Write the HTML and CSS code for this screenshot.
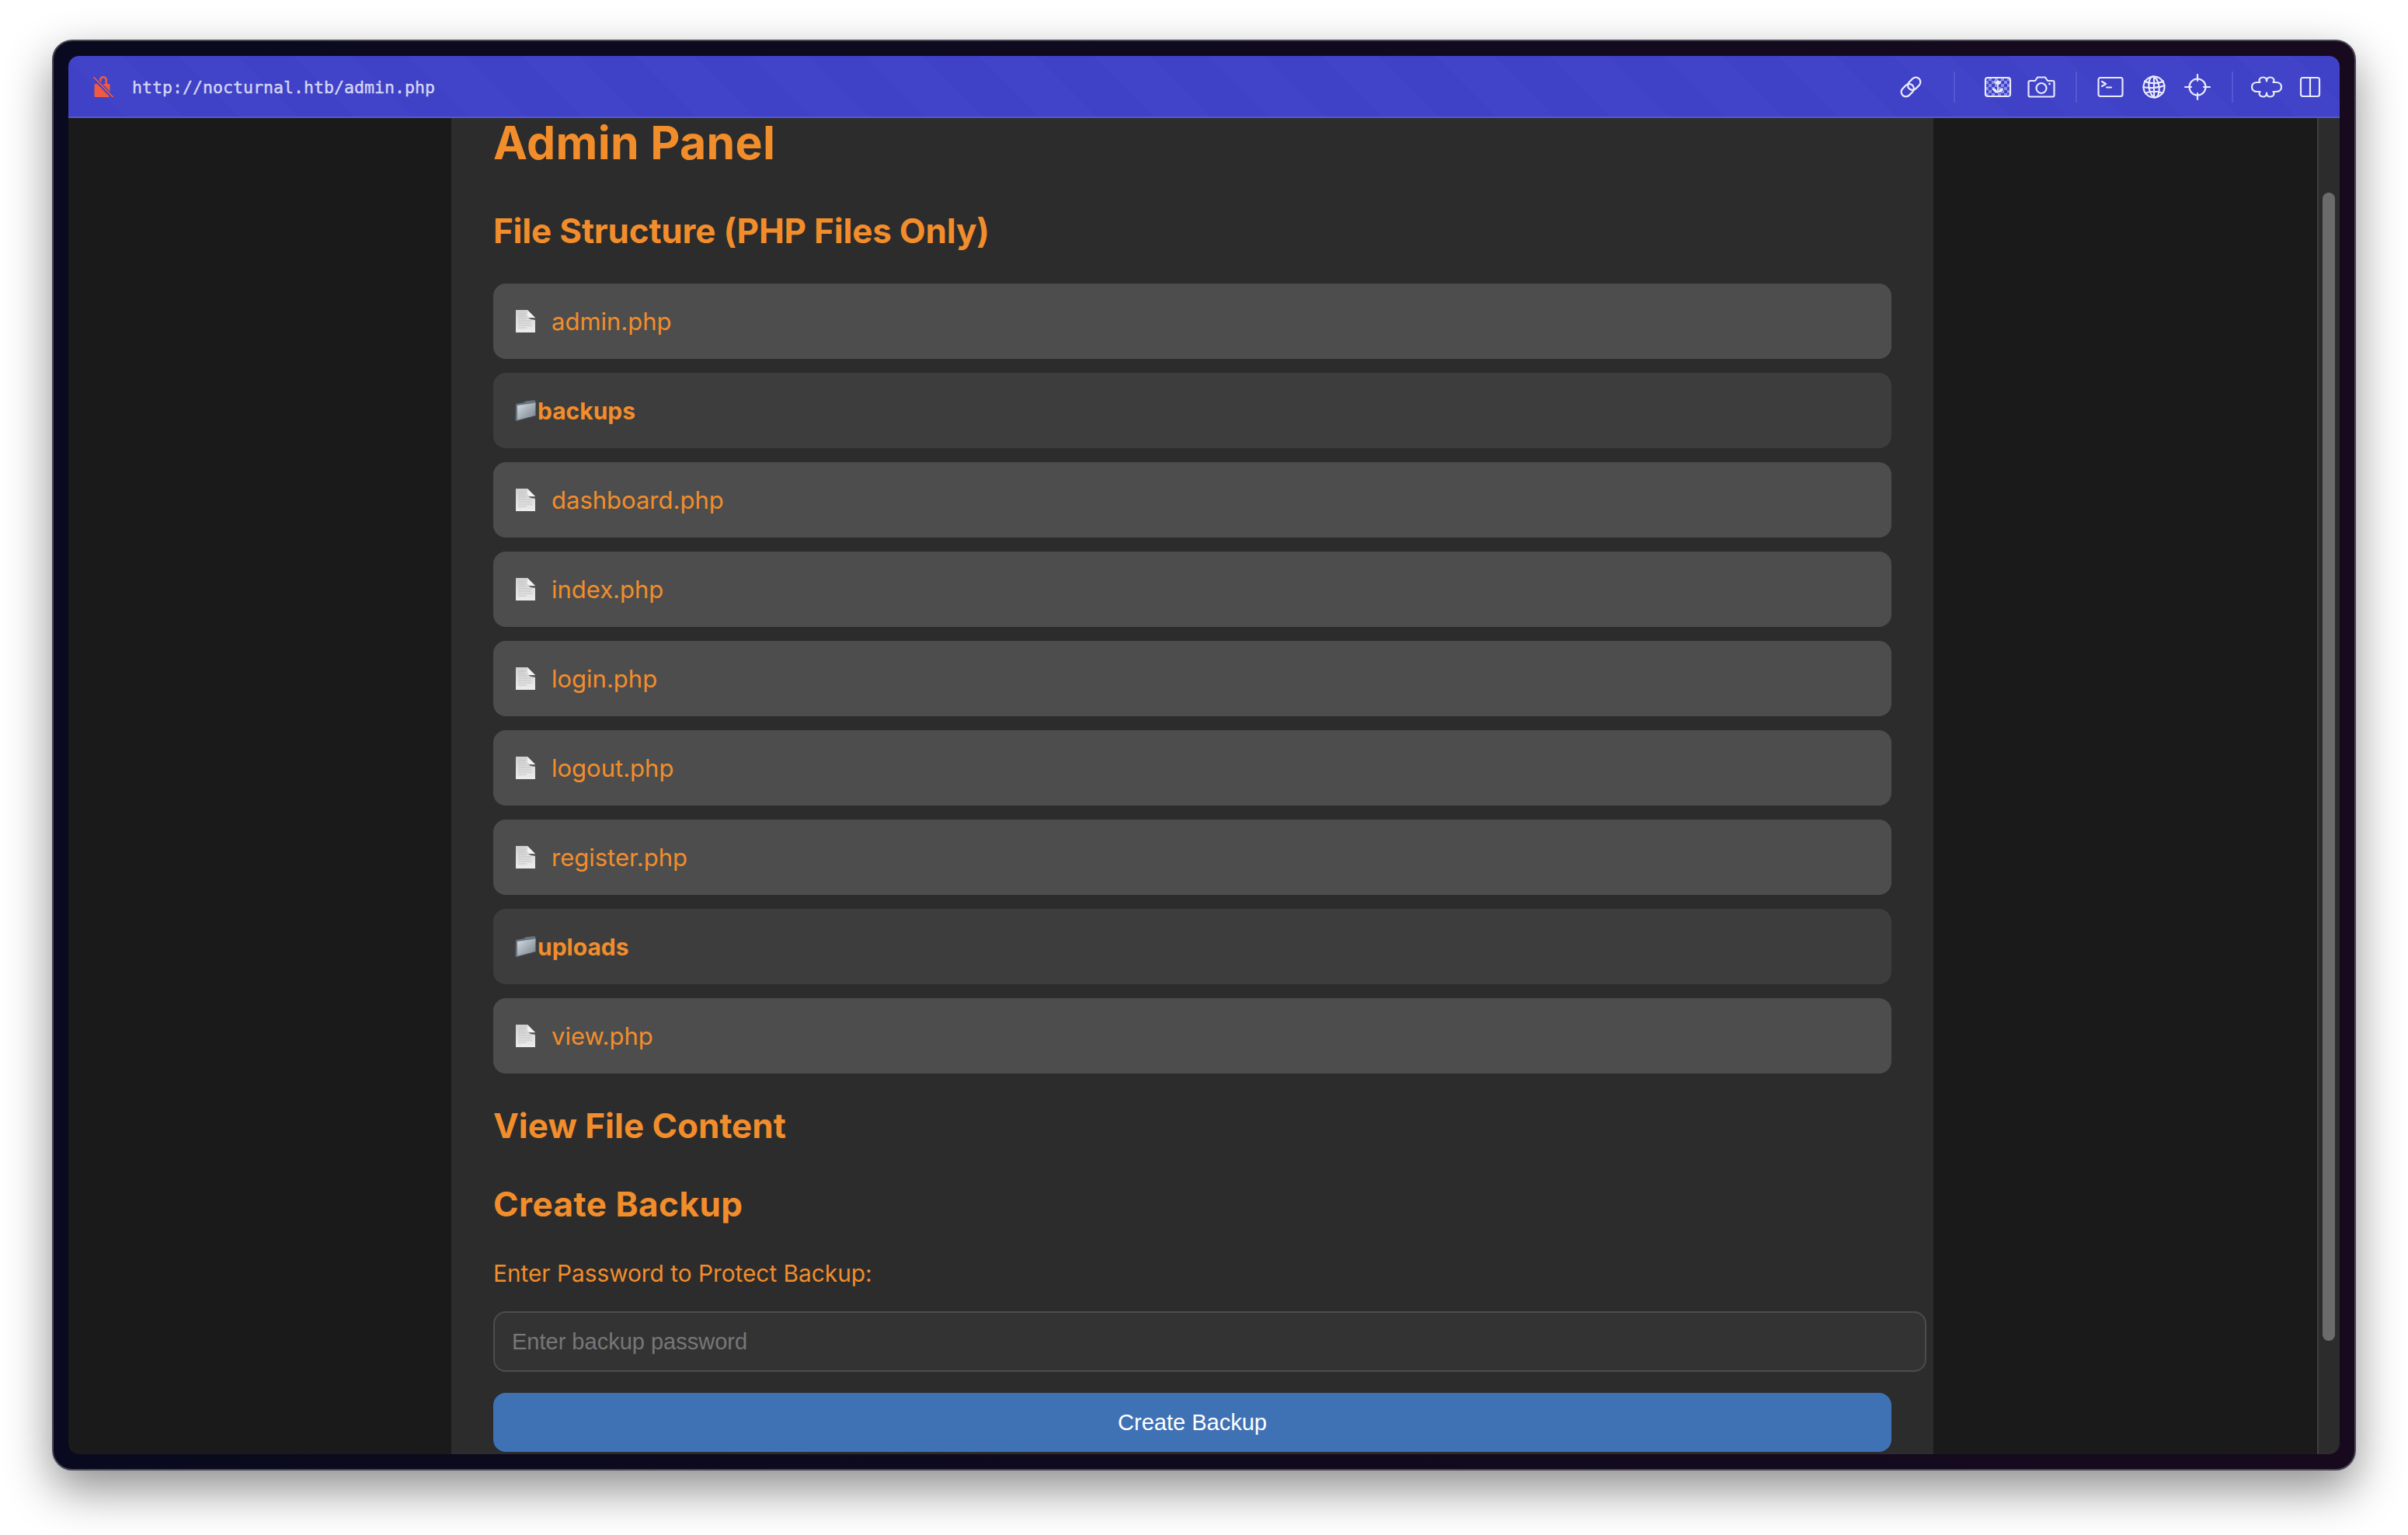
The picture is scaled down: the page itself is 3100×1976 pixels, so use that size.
FILE: index.html
```html
<!DOCTYPE html>
<html lang="en">
<head>
  <meta charset="UTF-8">
  <title>Admin Panel</title>
  <link rel="stylesheet" href="styles.css">
</head>
<body>
  <svg class="defs" aria-hidden="true">
    <defs>
      <linearGradient id="fileFill" x1="0" y1="0" x2="0" y2="1">
        <stop offset="0" stop-color="#d0d0d0"/>
        <stop offset="1" stop-color="#ececec"/>
      </linearGradient>
      <linearGradient id="folderFill" x1="0" y1="0" x2="1" y2="1">
        <stop offset="0" stop-color="#d6dce1"/>
        <stop offset="1" stop-color="#76818b"/>
      </linearGradient>
      <pattern id="checks" width="8" height="8" patternUnits="userSpaceOnUse">
        <rect x="0" y="0" width="4" height="4" fill="#8c8fe6"/>
        <rect x="4" y="4" width="4" height="4" fill="#8c8fe6"/>
      </pattern>
      <symbol id="file" viewBox="0 0 25 29">
        <path d="M0 0H15L25 10V29H0Z" fill="url(#fileFill)"/>
        <path d="M3 5H12M3 8H12M3 11H14M3 14H20M3 17H20M3 20H21M3 23H14" stroke="#c2c2c2" stroke-width="1"/>
        <path d="M15 0L25 10L25 13L19 12L15 9Z" fill="#5e5e5e"/>
        <path d="M15 0L25 10H17Q15 10 15 8Z" fill="#f2f2f2"/>
      </symbol>
      <symbol id="folder" viewBox="0 0 27 27">
        <path d="M1 5L12 3L13 1.500L25 0L26.500 1.500L27 20L2 27L0.500 26Z" fill="#66727d"/>
        <path d="M3 7L26.500 3.500L25.500 20L3 25.500Z" fill="url(#folderFill)"/>
      </symbol>
    </defs>
  </svg>

  <div class="window">
    <div class="screen">
      <header class="toolbar">
        <svg class="lock" viewBox="0 0 26 28" width="26" height="28">
          <path d="M3 11H8V6.500C8 3 10 1 13 1S18 3 18 6.500V11H20Q21.500 11 21.500 12.500V26.500Q21.500 28 20 28H3Q1.500 28 1.500 26.500V12.500Q1.500 11 3 11ZM10.500 11H15.500V6.500C15.500 4.500 14.500 3.500 13 3.500S10.500 4.500 10.500 6.500Z" fill="#ef5a45" fill-rule="evenodd"/>
          <path d="M0 2L25 28" stroke="#3f41c6" stroke-width="5"/>
          <path d="M0.500 2L25.500 28" stroke="#ef5a45" stroke-width="1.800"/>
        </svg>
        <span class="url">http://nocturnal.htb/admin.php</span>
        <div class="tools">
          <span class="tool">
            <svg viewBox="0 0 40 40"><g transform="rotate(-45 20 20)"><rect x="5" y="14" width="18" height="12" rx="6"/><rect x="17" y="14" width="18" height="12" rx="6"/></g></svg>
          </span>
          <span class="sep sep-wide"></span>
          <span class="tool">
            <svg viewBox="0 0 40 40"><rect x="4" y="8" width="32" height="24" rx="3" class="checked"/><path d="M20 17C17 17 15.500 15 15.500 11.500L17.500 13L20 11L22.500 13L24.500 11.500C24.500 15 23 17 20 17ZM19.200 17H20.800V28H19.200ZM13 21.500C16 21 19 23 19.500 27C16 27.500 13.500 25 13 21.500ZM27 21.500C24 21 21 23 20.500 27C24 27.500 26.500 25 27 21.500Z" class="solid"/></svg>
          </span>
          <span class="tool">
            <svg viewBox="0 0 40 40"><path d="M5.500 32.500H34.500A2 2 0 0 0 36.500 30.500V14A2 2 0 0 0 34.500 12H28L25 7.500H15L12 12H5.500A2 2 0 0 0 3.500 14V30.500A2 2 0 0 0 5.500 32.500Z"/><circle cx="20" cy="21.500" r="6.500"/><circle cx="30.500" cy="16" r="1.400" class="solid"/></svg>
          </span>
          <span class="sep"></span>
          <span class="tool">
            <svg viewBox="0 0 40 40"><rect x="4.500" y="8" width="31" height="24" rx="2.500"/><path d="M9 13L14 16L9 19M15 20.500H21"/></svg>
          </span>
          <span class="tool">
            <svg viewBox="0 0 40 40"><circle cx="20" cy="20" r="13.500"/><ellipse cx="20" cy="20" rx="6.500" ry="13.500" transform="rotate(-8 20 20)"/><path d="M20 6.500V33.500M8 12.500C14 16 26 16 32 12.500M6.500 20C13 22 27 21 33.500 18M9 28C15 25 25 25 31 28"/></svg>
          </span>
          <span class="tool">
            <svg viewBox="0 0 40 40"><circle cx="20" cy="20" r="10.500"/><path d="M20 4V12M20 28V36M4 20H12M28 20H36"/></svg>
          </span>
          <span class="sep"></span>
          <span class="tool">
            <svg viewBox="0 0 40 40"><path d="M11.500 14C9 10.500 12 7.500 15.500 7.500C18.500 7.500 20 9.500 20 12.500C20 9.500 21.500 7.500 24.500 7.500C28 7.500 31 10.500 28.500 14H32C37 14 39 17 39 20C39 23 37 26 32 26H28.500C31 29.500 28 32.500 24.500 32.500C21.500 32.500 20 30.500 20 27.500C20 30.500 18.500 32.500 15.500 32.500C12 32.500 9 29.500 11.500 26H8C3 26 1 23 1 20C1 17 3 14 8 14Z"/></svg>
          </span>
          <span class="tool">
            <svg viewBox="0 0 40 40"><rect x="8" y="8" width="24" height="24" rx="2.500"/><path d="M20 8V32"/></svg>
          </span>
        </div>
      </header>

      <div class="view">
        <div class="page">
          <main class="container">
            <h1>Admin Panel</h1>
            <h2 class="structure-title">File Structure (PHP Files Only)</h2>
            <ul class="file-list">
              <li class="file-row"><svg class="file-icon"><use href="#file"/></svg>admin.php</li>
              <li class="dir-row"><svg class="dir-icon"><use href="#folder"/></svg>backups</li>
              <li class="file-row"><svg class="file-icon"><use href="#file"/></svg>dashboard.php</li>
              <li class="file-row"><svg class="file-icon"><use href="#file"/></svg>index.php</li>
              <li class="file-row"><svg class="file-icon"><use href="#file"/></svg>login.php</li>
              <li class="file-row"><svg class="file-icon"><use href="#file"/></svg>logout.php</li>
              <li class="file-row"><svg class="file-icon"><use href="#file"/></svg>register.php</li>
              <li class="dir-row"><svg class="dir-icon"><use href="#folder"/></svg>uploads</li>
              <li class="file-row"><svg class="file-icon"><use href="#file"/></svg>view.php</li>
            </ul>
            <h2 class="view-title">View File Content</h2>
            <h2 class="backup-title">Create Backup</h2>
            <label class="pass-label" for="pass">Enter Password to Protect Backup:</label>
            <input class="pass-input" id="pass" type="password" placeholder="Enter backup password">
            <button class="backup-btn">Create Backup</button>
          </main>
        </div>
        <div class="scrollbar"><div class="thumb"></div></div>
      </div>
    </div>
  </div>
</body>
</html>
```

FILE: styles.css
```css
html, body {
  margin: 0;
  height: 100%;
  overflow: hidden;
  background-color: #fff;
}
body {
  padding: 51px 67px 0;
  box-sizing: border-box;
  font-family: "Inter", sans-serif;
}
.defs {
  display: block;
  width: 0;
  height: 0;
}
.window {
  box-sizing: border-box;
  width: 2966px;
  height: 1842px;
  padding: 19px;
  border: 2px solid #4b4856;
  border-radius: 26px;
  background: linear-gradient(90deg, #090a1f, #170a1e);
  box-shadow: 0 24px 60px rgba(0,0,0,0.45);
}
.screen {
  display: flex;
  flex-direction: column;
  height: 100%;
  border-radius: 14px;
  overflow: hidden;
}

/* toolbar */
.toolbar {
  box-sizing: border-box;
  display: flex;
  align-items: center;
  flex: none;
  height: 80px;
  padding: 2px 10px 0 32px;
  border-bottom: 2px solid #5558cf;
  background: repeating-linear-gradient(45deg, #3f41c6 0, #3f41c6 52px, #4143c9 52px, #4143c9 104px);
}
.lock {
  flex: none;
  margin: -2px 24px 0 0;
}
.url {
  font-family: "DejaVu Sans Mono", monospace;
  font-size: 21.6px;
  color: #d5d7f6;
  -webkit-text-stroke: 0.4px #d5d7f6;
}
.tools {
  display: flex;
  align-items: center;
  margin-left: auto;
}
.tool {
  display: flex;
  justify-content: center;
  width: 56px;
}
.tool svg {
  width: 40px;
  height: 40px;
  fill: none;
  stroke: #e9eafb;
  stroke-width: 2.2;
  stroke-linecap: round;
  stroke-linejoin: round;
}
.tool .solid {
  fill: #e9eafb;
  stroke: none;
}
.tool .checked {
  fill: url(#checks);
}
.sep {
  width: 2px;
  height: 40px;
  margin: 0 15px 0 16px;
  background-color: #5558cf;
}
.sep-wide {
  margin: 0 27px;
}

/* page */
.view {
  display: flex;
  flex: 1;
  min-height: 0;
}
.page {
  flex: 1;
  min-width: 0;
  background-color: #1a1a1a;
}
.container {
  box-sizing: border-box;
  width: 1908px;
  height: 100%;
  margin-left: 493px;
  padding: 0 54px;
  background-color: #2c2c2c;
  color: #f28d2b;
}
h1 {
  margin: 0;
  padding-top: 2px;
  font-size: 59px;
  font-weight: 700;
  line-height: 60px;
  letter-spacing: 0.3px;
}
h2 {
  margin: 0;
  font-size: 44px;
  font-weight: 700;
  line-height: 50px;
}
.structure-title {
  margin-top: 58px;
  letter-spacing: -0.2px;
}
.file-list {
  display: flex;
  flex-direction: column;
  gap: 18px;
  margin: 43px 0 0;
  padding: 0;
  list-style: none;
}
.file-row, .dir-row {
  display: flex;
  align-items: center;
  box-sizing: border-box;
  height: 97px;
  border-radius: 16px;
  font-size: 31px;
}
.file-row {
  padding-left: 29px;
  background-color: #4d4d4d;
}
.dir-row {
  padding-left: 28px;
  background-color: #3d3d3d;
  font-size: 30px;
  font-weight: 700;
}
.file-icon {
  flex: none;
  width: 25px;
  height: 29px;
  margin-right: 21px;
}
.dir-icon {
  flex: none;
  width: 27px;
  height: 27px;
  margin-right: 2px;
}
.view-title {
  margin-top: 42px;
}
.backup-title {
  margin-top: 51px;
  letter-spacing: 0.5px;
}
.pass-label {
  display: block;
  margin-top: 45px;
  font-size: 29.8px;
  line-height: 38px;
}
.pass-input {
  display: block;
  box-sizing: border-box;
  width: calc(100% + 45px);
  height: 78px;
  margin-top: 30px;
  padding: 0 22px;
  border: 2px solid #4d4d4d;
  border-radius: 16px;
  background-color: #333;
  font-family: "Liberation Sans", sans-serif;
  font-size: 29px;
  color: #fff;
}
.pass-input::placeholder {
  color: #777;
}
.backup-btn {
  display: block;
  width: 100%;
  height: 76px;
  margin-top: 27px;
  border: 0;
  border-radius: 16px;
  background-color: #3f71b5;
  font-family: "Liberation Sans", sans-serif;
  font-size: 29px;
  color: #fff;
}

/* scrollbar */
.scrollbar {
  box-sizing: border-box;
  flex: none;
  width: 29px;
  padding: 96px 0 0 5px;
  border-left: 2px solid #3f3f3f;
  background-color: #2c2c2c;
}
.thumb {
  width: 16px;
  height: 1478px;
  border-radius: 8px;
  background-color: #6b6b6b;
}
```
